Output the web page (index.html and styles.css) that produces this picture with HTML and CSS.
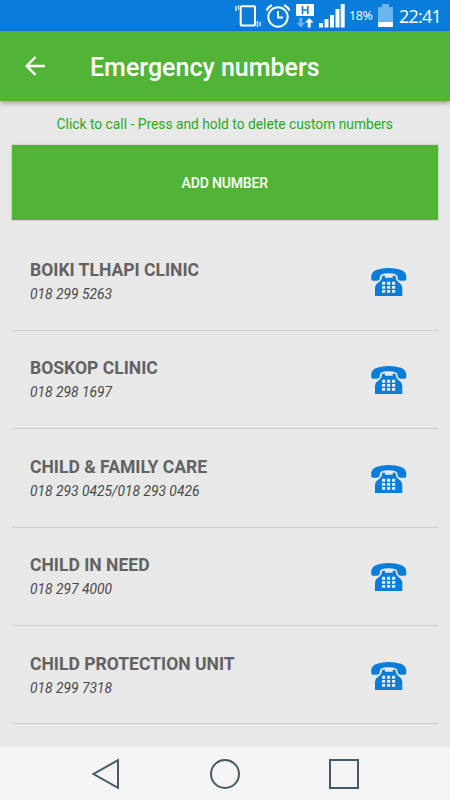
FILE: index.html
```
<!DOCTYPE html>
<html lang="en">
<head>
    <meta charset="UTF-8">
    <meta name="viewport" content="width=device-width, initial-scale=1.0">
    <title>Emergency numbers</title>
    <link rel="stylesheet" href="styles.css">
</head>
<body>
    <svg class="symbols">
        <symbol id="phone" viewBox="0 0 36 29">
            <path d="M1 12.500Q0 12 0.300 7.500Q1 3.500 6 1.700Q11 0 17.700 0Q25 0 29.500 1.700Q34.500 3.500 35.200 7.500Q35.500 12 34.500 12.500Q31 13.300 28 12.300Q26.400 11.500 26.600 9.500Q26.600 7.500 25 6.500Q22 5.200 17.700 5.200Q13 5.200 10.200 6.500Q8.800 7.500 8.800 9.500Q9 11.500 7.500 12.300Q5 13.300 1 12.500Z"/>
            <path d="M11.200 7.800H14V9.800H21.700V7.800H24.500L25.200 11.500Q27 14 29.800 16Q31.300 18 31.300 20V28H4V20Q4 18 5.500 16Q8.500 14 10.400 11.500Z"/>
            <path class="keys" d="M11 13.800h3.200v3h-3.200zM16 13.800h3.200v3h-3.200zM21 13.800h3.200v3h-3.200zM11 18h3.200v2.700h-3.200zM16 18h3.200v2.700h-3.200zM21 18h3.200v2.700h-3.200zM11 22h3.200v2.700h-3.200zM16 22h3.200v2.700h-3.200zM21 22h3.200v2.700h-3.200z"/>
        </symbol>
    </svg>

    <div class="status-bar">
        <svg class="vibrate" width="26" height="24" viewBox="0 0 26 24">
            <rect x="5.700" y="2.200" width="14.300" height="19.300" rx="1"/>
            <path d="M1 2v5M3.500 1.500v4M22.400 17v6M25 18v4"/>
        </svg>
        <svg class="alarm" width="26" height="26" viewBox="0 0 26 26">
            <circle cx="13" cy="14" r="9.700"/>
            <path d="M13 8v6.500h5M1.500 7.500Q3 4 7 2M24.500 7.500Q23 4 19 2"/>
        </svg>
        <svg class="data" width="18" height="24" viewBox="0 0 18 24">
            <rect x="0" y="0" width="18" height="12" rx="1" fill="#fff"/>
            <path d="M6.500 2v8M11.800 2v8M6.500 6h5.300" stroke="#0a7ddb" stroke-width="1.600"/>
            <path d="M3.300 14h3v5H9l-4.200 4.500L.5 19h2.800z" fill="#6db5ee"/>
            <path d="M11.700 23.500h3v-5h2.800L13.200 14 9 18.500h2.700z" fill="#fff"/>
        </svg>
        <svg class="signal" width="26" height="24" viewBox="0 0 26 24">
            <path d="M0 19h4v4.500H0zM5.500 15h4v8.500h-4zM11 11h4v12.500h-4zM16.500 5h4v18.500h-4zM21.700 0h4v23.500h-4z"/>
        </svg>
        <span class="percent">18%</span>
        <svg class="battery" width="15" height="23" viewBox="0 0 15 23">
            <path d="M4 0h7v3h4v15H0V3h4z" fill="#6db5ee"/>
            <path d="M0 18h15v5H0z" fill="#fff"/>
        </svg>
        <span class="clock">22:41</span>
    </div>

    <header class="app-bar">
        <svg class="back" width="22" height="20" viewBox="0 0 22 20">
            <path d="M21 10H3M11.500 1L2.700 10l8.800 9"/>
        </svg>
        <h1>Emergency numbers</h1>
    </header>

    <main class="content">
        <p class="hint">Click to call - Press and hold to delete custom numbers</p>
        <button class="add-number">ADD NUMBER</button>
        <ul class="numbers">
            <li>
                <div>
                    <h2>BOIKI TLHAPI CLINIC</h2>
                    <p>018 299 5263</p>
                </div>
                <svg class="phone"><use href="#phone"/></svg>
            </li>
            <li>
                <div>
                    <h2>BOSKOP CLINIC</h2>
                    <p>018 298 1697</p>
                </div>
                <svg class="phone"><use href="#phone"/></svg>
            </li>
            <li>
                <div>
                    <h2>CHILD &amp; FAMILY CARE</h2>
                    <p>018 293 0425/018 293 0426</p>
                </div>
                <svg class="phone"><use href="#phone"/></svg>
            </li>
            <li>
                <div>
                    <h2>CHILD IN NEED</h2>
                    <p>018 297 4000</p>
                </div>
                <svg class="phone"><use href="#phone"/></svg>
            </li>
            <li>
                <div>
                    <h2>CHILD PROTECTION UNIT</h2>
                    <p>018 299 7318</p>
                </div>
                <svg class="phone"><use href="#phone"/></svg>
            </li>
        </ul>
    </main>

    <nav class="nav-bar">
        <svg width="32" height="32" viewBox="0 0 32 32"><path d="M28 2.200v27.600L3.500 16z"/></svg>
        <svg width="32" height="32" viewBox="0 0 32 32"><circle cx="16" cy="16" r="14"/></svg>
        <svg width="32" height="32" viewBox="0 0 32 32"><rect x="2" y="2" width="28" height="28"/></svg>
    </nav>
</body>
</html>
```
FILE: styles.css
```
* {
    box-sizing: border-box;
    margin: 0;
    padding: 0;
}

body {
    display: flex;
    flex-direction: column;
    height: 800px;
    overflow: hidden;
    background-color: #e8e8e8;
    font-family: Roboto, Arial, sans-serif;
}

svg {
    flex-shrink: 0;
}

.symbols {
    display: none;
}

/* Status bar */
.status-bar {
    display: flex;
    align-items: center;
    flex-shrink: 0;
    height: 31px;
    padding-left: 235px;
    background-color: #0a7ddb;
    color: #fff;
}

.vibrate,
.alarm {
    fill: none;
    stroke: #fff;
    stroke-width: 2;
}

.vibrate path {
    stroke-width: 1.3;
}

.alarm {
    margin-left: 4px;
}

.data {
    margin-left: 5px;
}

.signal {
    margin-left: 5px;
    fill: #fff;
}

.percent {
    width: 29px;
    margin-left: 4px;
    font-family: "Open Sans", sans-serif;
    font-size: 12.5px;
    letter-spacing: -0.4px;
}

.clock {
    margin-left: 6px;
    font-family: "Open Sans", sans-serif;
    font-size: 18px;
    font-weight: 500;
    letter-spacing: -0.8px;
}

/* App bar */
.app-bar {
    display: flex;
    align-items: center;
    flex-shrink: 0;
    height: 70px;
    padding: 2px 0 0 24px;
    background-color: #52b437;
    box-shadow: 0 2px 5px rgba(0, 0, 0, 0.35);
}

.app-bar h1 {
    margin-left: 44px;
    color: #fff;
    font-size: 25px;
    font-weight: 500;
}

.back {
    margin-top: -2px;
    fill: none;
    stroke: #fff;
    stroke-width: 2.4;
}

/* Content */
.content {
    flex: 1;
    padding: 14px 12.5px 0 12px;
}

.hint {
    height: 30px;
    color: #24ac18;
    font-size: 13.8px;
    line-height: 18px;
    text-align: center;
}

.add-number {
    display: block;
    width: 100%;
    height: 75px;
    border: none;
    background-color: #52b437;
    box-shadow: 0 0 1px 1px rgba(0, 0, 0, 0.08);
    color: #fff;
    font-family: inherit;
    font-size: 14px;
    font-weight: 500;
    letter-spacing: -0.15px;
}

.numbers {
    margin-top: 12.5px;
    list-style: none;
}

.numbers li {
    display: flex;
    justify-content: space-between;
    height: 98.4px;
    padding: 26.6px 31px 0 18px;
    border-bottom: 1px solid #cecece;
}

.numbers h2 {
    color: #626262;
    font-size: 17.55px;
    font-weight: 700;
    line-height: 22px;
}

.numbers p {
    margin-top: 4px;
    color: #484848;
    font-size: 13.8px;
    font-style: italic;
    line-height: 18px;
}

.phone {
    width: 36px;
    height: 29px;
    margin-top: 9px;
    fill: #0a7ddb;
}

.keys {
    fill: #e4edf5;
}

/* Navigation bar */
.nav-bar {
    display: flex;
    align-items: center;
    justify-content: center;
    gap: 87px;
    flex-shrink: 0;
    height: 53px;
    background-color: #f4f4f4;
}

.nav-bar svg {
    fill: none;
    stroke: #455a66;
    stroke-width: 2;
}
```
